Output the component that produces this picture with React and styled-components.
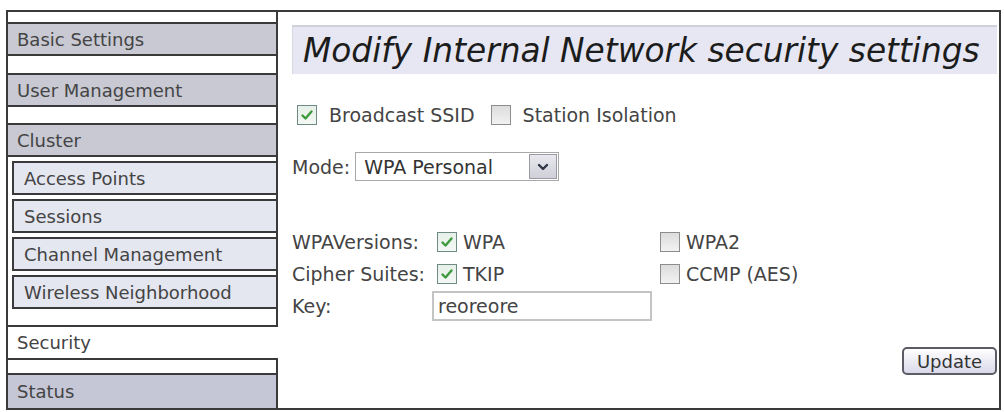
import React from "react";
import styled, { createGlobalStyle } from "styled-components";

const GlobalStyle = createGlobalStyle`
  html, body {
    margin: 0;
    padding: 0;
    background: #ffffff;
  }
  body {
    font-family: "DejaVu Sans", Verdana, sans-serif;
    color: #444;
  }
`;

// gap = white space above the item, in px
const menu = [
  { label: "Basic Settings", kind: "top", gap: 10 },
  { label: "User Management", kind: "top", gap: 17 },
  { label: "Cluster", kind: "top", gap: 16 },
  { label: "Access Points", kind: "sub", gap: 4 },
  { label: "Sessions", kind: "sub", gap: 4 },
  { label: "Channel Management", kind: "sub", gap: 4 },
  { label: "Wireless Neighborhood", kind: "sub", gap: 4 },
  { label: "Security", kind: "active", gap: 16 },
  { label: "Status", kind: "last", gap: 13 },
];

const fills = {
  top: "#c8c9d3",
  sub: "#e4e6f0",
  active: "#ffffff",
  last: "#c5c7d6",
};

function Check({ checked }) {
  return (
    <Box $checked={checked}>
      {checked && (
        <svg width="14" height="14" viewBox="0 0 14 14">
          <path
            d="M2.5 7.5 L5.5 10.5 L11.5 3.5"
            fill="none"
            stroke="#3d9a3d"
            strokeWidth="2.4"
            strokeLinecap="round"
            strokeLinejoin="round"
          />
        </svg>
      )}
    </Box>
  );
}

export default function App() {
  return (
    <>
      <GlobalStyle />
      <Page>
        <Sidebar>
          {menu.map((item) => (
            <MenuItem key={item.label} $kind={item.kind} $gap={item.gap}>
              {item.label}
            </MenuItem>
          ))}
        </Sidebar>

        <Main>
          <Header>
            <h1>Modify Internal Network security settings</h1>
          </Header>

          <CheckRow>
            <Option>
              <Check checked />
              <span>Broadcast SSID</span>
            </Option>
            <Option>
              <Check />
              <span>Station Isolation</span>
            </Option>
          </CheckRow>

          <ModeRow>
            <span>Mode:</span>
            <Select>
              <span>WPA Personal</span>
              <DropButton>
                <svg width="14" height="10" viewBox="0 0 14 10">
                  <path
                    d="M3 3 L7 7 L11 3"
                    fill="none"
                    stroke="#2f3545"
                    strokeWidth="2.4"
                    strokeLinecap="round"
                    strokeLinejoin="round"
                  />
                </svg>
              </DropButton>
            </Select>
          </ModeRow>

          <FormGrid>
            <Label>WPAVersions:</Label>
            <GridOption $inset>
              <Check checked />
              <span>WPA</span>
            </GridOption>
            <GridOption>
              <Check />
              <span>WPA2</span>
            </GridOption>

            <Label>Cipher Suites:</Label>
            <GridOption $inset>
              <Check checked />
              <span>TKIP</span>
            </GridOption>
            <GridOption>
              <Check />
              <span>CCMP (AES)</span>
            </GridOption>

            <Label>Key:</Label>
            <KeyInput defaultValue="reoreore" />
          </FormGrid>

          <Actions>
            <UpdateButton>Update</UpdateButton>
          </Actions>
        </Main>
      </Page>
    </>
  );
}

const Page = styled.div`
  display: flex;
  align-items: flex-start;
  padding: 10px 0 0 6px;
  height: 412px;
  box-sizing: border-box;
`;

const Sidebar = styled.nav`
  width: 272px;
  flex: none;
  box-sizing: border-box;
  border-top: 2px solid #3a3a3a;
  border-left: 2px solid #3a3a3a;
  display: flex;
  flex-direction: column;
`;

const MenuItem = styled.div`
  box-sizing: border-box;
  margin-top: ${(p) => p.$gap}px;
  margin-left: ${(p) => (p.$kind === "sub" ? "4px" : "-2px")};
  width: ${(p) => (p.$kind === "sub" ? "266px" : "272px")};
  height: ${(p) => (p.$kind === "active" ? "35px" : p.$kind === "last" ? "37px" : "34px")};
  padding-left: ${(p) => (p.$kind === "sub" ? "10px" : "9px")};
  display: flex;
  align-items: center;
  font-size: 18px;
  color: #444;
  white-space: nowrap;
  background: ${(p) => fills[p.$kind]};
  border: 2px solid #3a3a3a;
  border-right-width: ${(p) => (p.$kind === "active" ? "0" : "2px")};
  position: relative;
  z-index: ${(p) => (p.$kind === "active" ? 1 : "auto")};
`;

const Main = styled.main`
  margin-left: -2px;
  width: 725px;
  height: 400px;
  box-sizing: border-box;
  border: 2px solid #3a3a3a;
  padding: 13px 2px 0 14px;
  display: flex;
  flex-direction: column;
`;

const Header = styled.div`
  height: 49px;
  box-sizing: border-box;
  background: #e6e7f2;
  border-top: 2px solid #cfd0da;
  border-left: 1px solid #d6d7df;
  display: flex;
  align-items: center;
  padding-left: 10px;

  h1 {
    margin: 0;
    font-size: 32.8px;
    font-weight: normal;
    font-style: italic;
    color: #1c1c1c;
    white-space: nowrap;
  }
`;

const CheckRow = styled.div`
  display: flex;
  align-items: center;
  gap: 16px;
  margin-top: 30px;
  padding-left: 5px;
  height: 22px;
`;

const Option = styled.label`
  display: flex;
  align-items: center;
  gap: 12px;
  font-size: 19px;
  color: #444;
`;

const GridOption = styled(Option)`
  gap: 6px;
  padding-left: ${(p) => (p.$inset ? "5px" : "0")};
`;

const Box = styled.span`
  width: 20px;
  height: 20px;
  box-sizing: border-box;
  flex: none;
  display: inline-flex;
  align-items: center;
  justify-content: center;
  border: 1.5px solid ${(p) => (p.$checked ? "#6f8c84" : "#8d8d8d")};
  background: ${(p) =>
    p.$checked
      ? "linear-gradient(#e6efe8, #f4f8f4)"
      : "linear-gradient(#dcdcdc, #f2f2f2)"};
`;

const ModeRow = styled.div`
  display: flex;
  align-items: center;
  gap: 5px;
  margin-top: 26px;
  font-size: 19px;
  color: #444;
`;

const Select = styled.div`
  width: 204px;
  height: 29px;
  box-sizing: border-box;
  border: 1px solid #a8a8a8;
  background: #fff;
  display: flex;
  align-items: center;
  justify-content: space-between;
  padding: 0 1px 0 8px;
  font-size: 19px;
  color: #333;
`;

const DropButton = styled.span`
  width: 28px;
  height: 25px;
  box-sizing: border-box;
  border: 1px solid #9a9aa2;
  background: linear-gradient(#e8e8ee, #cfd0d8);
  display: flex;
  align-items: center;
  justify-content: center;
`;

const FormGrid = styled.div`
  display: grid;
  grid-template-columns: 140px 228px 1fr;
  grid-auto-rows: 32px;
  align-items: center;
  margin-top: 45px;
`;

const Label = styled.span`
  color: #444;
  font-size: 19px;
`;

const KeyInput = styled.input`
  width: 220px;
  height: 30px;
  box-sizing: border-box;
  border: 2px solid #c4c4c4;
  padding: 0 4px;
  font-family: "DejaVu Sans", Verdana, sans-serif;
  font-size: 19px;
  color: #444;
  outline: none;
`;

const Actions = styled.div`
  display: flex;
  justify-content: flex-end;
  margin-top: 25px;
`;

const UpdateButton = styled.button`
  width: 95px;
  height: 28px;
  box-sizing: border-box;
  border: 2px solid #5c5c66;
  border-radius: 5px;
  background: linear-gradient(#ffffff, #d9d9ea);
  font-family: "DejaVu Sans", Verdana, sans-serif;
  font-size: 18px;
  color: #333;
  padding: 0;
`;
